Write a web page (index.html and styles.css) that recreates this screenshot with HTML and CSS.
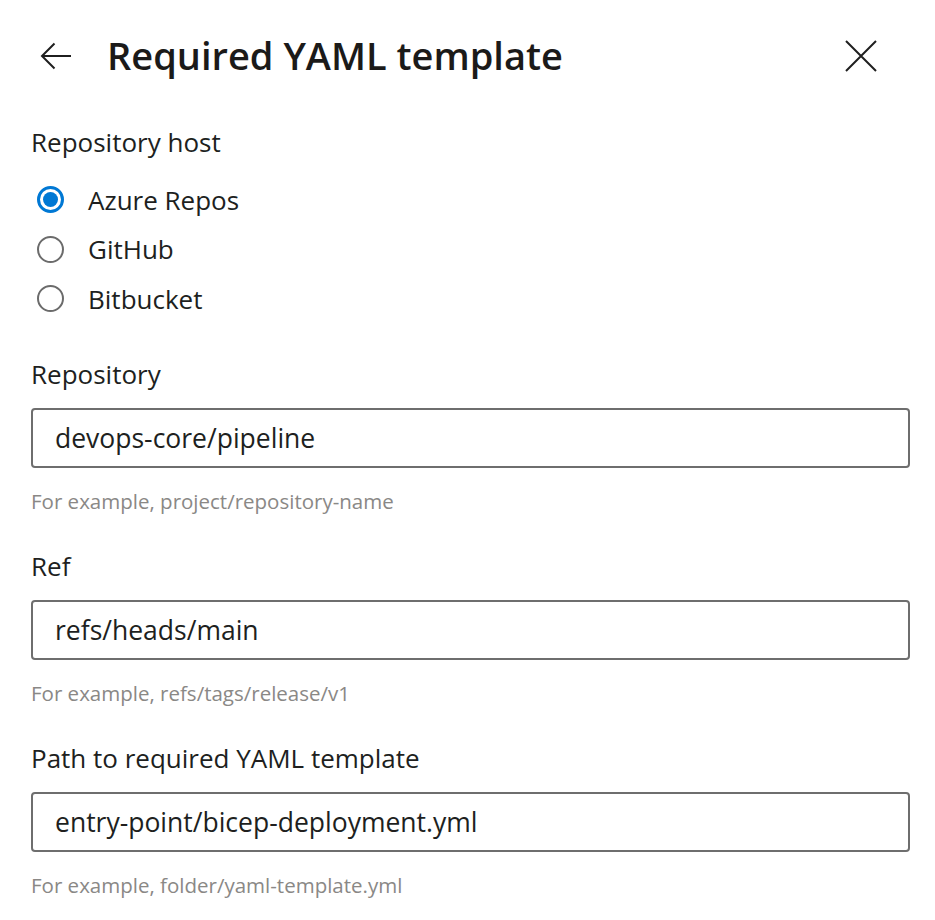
FILE: index.html
```html
<!DOCTYPE html>
<html lang="en">
<head>
<meta charset="utf-8">
<title>Required YAML template</title>
<link rel="stylesheet" href="styles.css">
</head>
<body>
<div class="panel">
  <header class="header">
    <button class="icon-btn back" aria-label="Back">
      <svg width="32" height="28" viewBox="0 0 32 28"><path d="M31 14H2.5M14.5 1.5L2 14l12.5 12.5" fill="none" stroke="#1f1f1f" stroke-width="2"/></svg>
    </button>
    <h1 class="title">Required YAML template</h1>
    <button class="icon-btn close" aria-label="Close">
      <svg width="32" height="32" viewBox="0 0 32 32"><path d="M1 1L31 31M31 1L1 31" fill="none" stroke="#1f1f1f" stroke-width="2"/></svg>
    </button>
  </header>

  <div class="group">
    <div class="label host-label">Repository host</div>
    <div class="radios">
      <label class="radio-row"><span class="radio checked"></span><span class="radio-text">Azure Repos</span></label>
      <label class="radio-row"><span class="radio"></span><span class="radio-text">GitHub</span></label>
      <label class="radio-row"><span class="radio"></span><span class="radio-text">Bitbucket</span></label>
    </div>
  </div>

  <div class="field first-field">
    <div class="label">Repository</div>
    <div class="input">devops-core/pipeline</div>
    <div class="helper">For example, project/repository-name</div>
  </div>

  <div class="field">
    <div class="label">Ref</div>
    <div class="input">refs/heads/main</div>
    <div class="helper">For example, refs/tags/release/v1</div>
  </div>

  <div class="field">
    <div class="label">Path to required YAML template</div>
    <div class="input">entry-point/bicep-deployment.yml</div>
    <div class="helper">For example, folder/yaml-template.yml</div>
  </div>
</div>
</body>
</html>
```

FILE: styles.css
```css
* { box-sizing: border-box; }
html, body { margin: 0; padding: 0; background: #ffffff; }
body {
  font-family: "Open Sans", "Noto Sans", sans-serif;
  color: #201f1e;
  width: 935px;
  height: 920px;
  overflow: hidden;
}
.panel {
  padding: 0 25px 0 31px;
  display: flex;
  flex-direction: column;
}
.header {
  display: flex;
  align-items: center;
  height: 80px;
  margin-top: 16px;
}
.icon-btn {
  background: none;
  border: 0;
  padding: 0;
  display: flex;
  align-items: center;
  justify-content: center;
  cursor: pointer;
}
.back { margin-left: 9px; width: 32px; height: 28px; }
.title {
  margin: -2px 0 0 35px;
  font-size: 38px;
  font-weight: 600;
  letter-spacing: 0;
  line-height: 48px;
  flex: 1;
  color: #1b1a19;
}
.close { width: 32px; height: 32px; margin-right: 33px; }

.label {
  font-size: 26px;
  line-height: 36px;
  color: #201f1e;
}
.host-label { margin-top: 28px; }
.radios {
  display: flex;
  flex-direction: column;
  margin-top: 15px;
}
.radio-row {
  display: flex;
  align-items: center;
  height: 49.5px;
}
.radio {
  width: 27px;
  height: 27px;
  margin-left: 6px;
  border: 2px solid #6b6b6b;
  border-radius: 50%;
  display: flex;
  align-items: center;
  justify-content: center;
}
.radio.checked {
  border: 3px solid #0078d4;
}
.radio.checked::after {
  content: "";
  width: 15px;
  height: 15px;
  border-radius: 50%;
  background: #0078d4;
}
.radio-text {
  margin-left: 24px;
  font-size: 26px;
  line-height: 36px;
}
.field { display: flex; flex-direction: column; margin-top: 32px; }
.first-field { margin-top: 32px; }
.field .label { margin-bottom: 16px; }
.input {
  height: 60px;
  border: 2px solid #6e6e6e;
  border-radius: 4px;
  padding: 0 22px;
  display: flex;
  align-items: center;
  font-size: 26.5px;
  color: #201f1e;
}
.helper {
  margin-top: 18px;
  font-size: 20.5px;
  line-height: 30px;
  color: #8a8886;
}
```
